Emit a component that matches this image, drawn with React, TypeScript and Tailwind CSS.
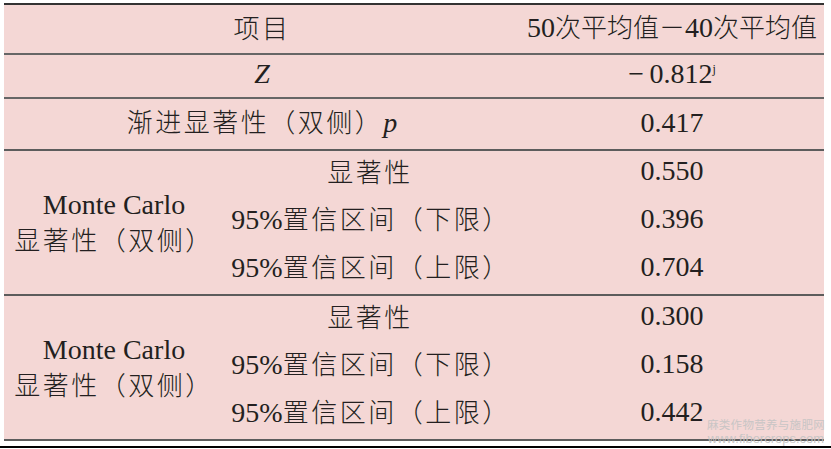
import React from "react"

const C = ({ children, tight }: { children: React.ReactNode; tight?: boolean }) => (
  <span
    className={
      tight
        ? "[font-family:Noto_Sans_CJK_SC,sans-serif] text-[26px] font-light tracking-[0px]"
        : "[font-family:Noto_Sans_CJK_SC,sans-serif] text-[26px] font-light tracking-[2.5px]"
    }
  >
    {children}
  </span>
)

const McGroup = ({ rows }: { rows: { label: React.ReactNode; value: string }[] }) => (
  <div className="grid h-[145px] grid-cols-[216px_300px_304px] grid-rows-[44px_48px_48px] border-b-2 border-[#5c5c5c]">
    <div className="row-span-3 flex flex-col items-center justify-center leading-[34px] pl-[4px] pt-[2px]">
      <span>Monte Carlo</span>
      <C>显著性（双侧）</C>
    </div>
    {rows.map((r, i) => (
      <React.Fragment key={i}>
        <div className={i === 0 ? "flex items-center justify-center pb-[4px]" : "flex items-center justify-center"}>
          {r.label}
        </div>
        <div className={i === 0 ? "flex items-center justify-center pb-[4px]" : "flex items-center justify-center"}>
          {r.value}
        </div>
      </React.Fragment>
    ))}
  </div>
)

const ci = (bound: string) => (
  <span className="pl-[2px]">
    95%<C>置信区间（{bound}限）</C>
  </span>
)

export default function App() {
  return (
    <div className="relative h-[449px] w-[831px] overflow-hidden bg-white [font-family:'Liberation_Serif','Times_New_Roman',Tinos,'DejaVu_Serif',serif] text-[28px] leading-none text-[#231f20]">
      <div className="ml-[4px] mt-[3px] w-[820px] border-t-2 border-[#333] bg-[#f4d7d5]">
        {/* header */}
        <div className="grid h-[50px] grid-cols-[516px_304px] border-b-2 border-[#666] pb-[4px]">
          <div className="flex items-center justify-center">
            <C>项目</C>
          </div>
          <div className="flex items-center justify-center">
            <span>
              50<C tight>次平均值－</C>40<C tight>次平均值</C>
            </span>
          </div>
        </div>

        <div className="grid h-[44px] grid-cols-[516px_304px] border-b-2 border-[#666] pb-[4px]">
          <div className="flex items-center justify-center italic">Z</div>
          <div className="flex items-center justify-center">
            <span>
              −&#8201;0.812<sup className="relative -top-[10px] text-[12px]">j</sup>
            </span>
          </div>
        </div>

        <div className="grid h-[52px] grid-cols-[516px_304px] border-b-2 border-[#5c5c5c] pb-[3px]">
          <div className="flex items-center justify-center">
            <span>
              <C>渐进显著性（双侧）</C>
              <i>p</i>
            </span>
          </div>
          <div className="flex items-center justify-center">0.417</div>
        </div>

        <McGroup
          rows={[
            { label: <C>显著性</C>, value: "0.550" },
            { label: ci("下"), value: "0.396" },
            { label: ci("上"), value: "0.704" },
          ]}
        />
        <McGroup
          rows={[
            { label: <C>显著性</C>, value: "0.300" },
            { label: ci("下"), value: "0.158" },
            { label: ci("上"), value: "0.442" },
          ]}
        />
      </div>
      <div className="mt-[5px] h-[2px] w-full bg-black" />

      <div className="absolute right-[6px] top-[417px] flex w-[118px] flex-col items-center whitespace-nowrap text-[#c4c4c4] opacity-90">
        <span className="[font-family:Noto_Sans_CJK_SC,sans-serif] text-[11.5px] leading-[15px] tracking-[0.3px]">
          麻类作物营养与施肥网
        </span>
        <span className="[font-family:'Liberation_Sans',sans-serif] text-[13px] leading-[14px]">
          www.fibercrops.com
        </span>
      </div>
    </div>
  )
}
